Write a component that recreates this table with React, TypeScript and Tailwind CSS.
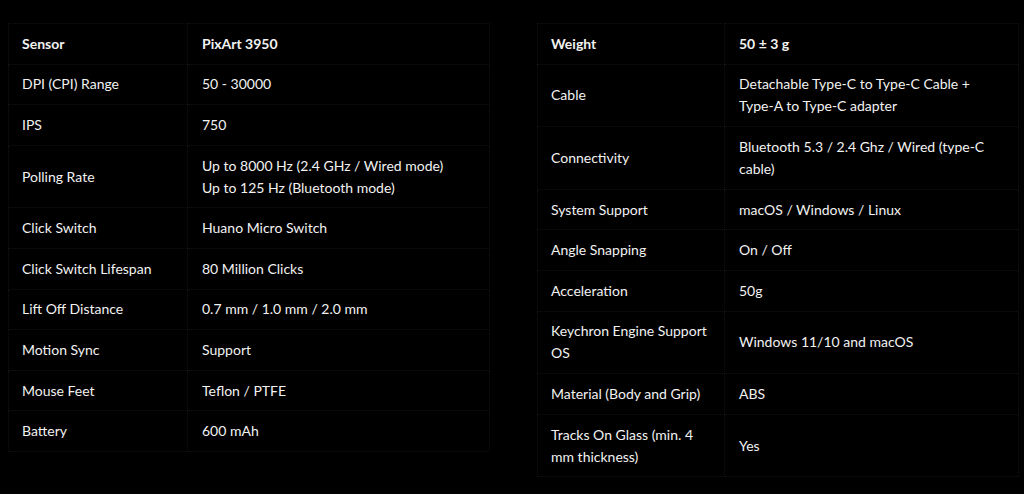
const left: [string, string[]][] = [
  ["Sensor", ["PixArt 3950"]],
  ["DPI (CPI) Range", ["50 - 30000"]],
  ["IPS", ["750"]],
  ["Polling Rate", ["Up to 8000 Hz (2.4 GHz / Wired mode)", "Up to 125 Hz (Bluetooth mode)"]],
  ["Click Switch", ["Huano Micro Switch"]],
  ["Click Switch Lifespan", ["80 Million Clicks"]],
  ["Lift Off Distance", ["0.7 mm / 1.0 mm / 2.0 mm"]],
  ["Motion Sync", ["Support"]],
  ["Mouse Feet", ["Teflon / PTFE"]],
  ["Battery", ["600 mAh"]],
];

const right: [string, string[]][] = [
  ["Weight", ["50 ± 3 g"]],
  ["Cable", ["Detachable Type-C to Type-C Cable + Type-A to Type-C adapter"]],
  ["Connectivity", ["Bluetooth 5.3 / 2.4 Ghz / Wired (type-C cable)"]],
  ["System Support", ["macOS / Windows / Linux"]],
  ["Angle Snapping", ["On / Off"]],
  ["Acceleration", ["50g"]],
  ["Keychron Engine Support OS", ["Windows 11/10 and macOS"]],
  ["Material (Body and Grip)", ["ABS"]],
  ["Tracks On Glass (min. 4 mm thickness)", ["Yes"]],
];

function SpecTable({ rows, labelWidth }: { rows: [string, string[]][]; labelWidth: string }) {
  return (
    <table className="w-[482px] border-collapse border border-dotted border-[#121212]">
      <tbody>
        {rows.map(([label, values], i) => (
          <tr key={label} className={i === 0 ? "font-bold" : ""}>
            <td
              className={`${labelWidth} border border-dotted border-[#121212] py-[8.8px] pl-[13px] pr-3 align-middle`}
            >
              {label}
            </td>
            <td className="border border-dotted border-[#121212] py-[8.8px] pl-[14px] pr-3 align-middle">
              {values.map((v) => (
                <div key={v}>{v}</div>
              ))}
            </td>
          </tr>
        ))}
      </tbody>
    </table>
  );
}

export default function App() {
  return (
    <div
      className="min-h-[494px] w-[1024px] bg-black pl-2 pt-[23px] text-[14px] leading-[22px] text-[#f2f2f2]"
      style={{ fontFamily: "Lato, 'Open Sans', sans-serif" }}
    >
      <div className="flex items-start gap-[47px]">
        <SpecTable rows={left} labelWidth="w-[179px]" />
        <SpecTable rows={right} labelWidth="w-[187px]" />
      </div>
    </div>
  );
}
